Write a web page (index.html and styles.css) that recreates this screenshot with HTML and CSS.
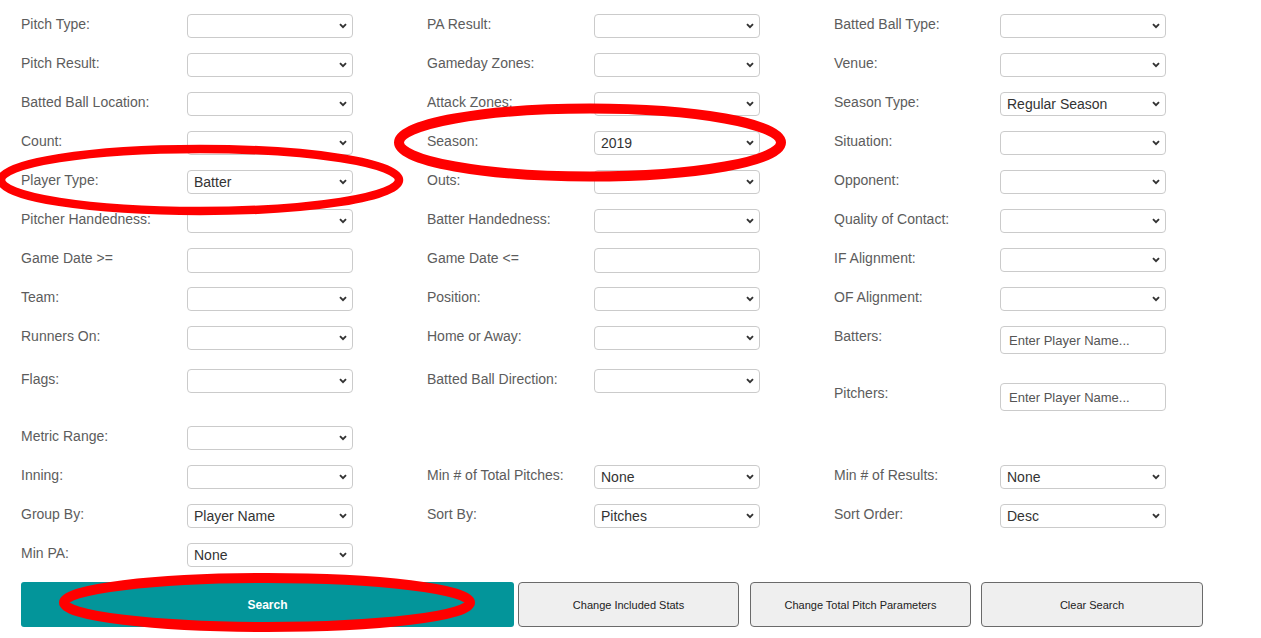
FILE: index.html
```html
<!DOCTYPE html>
<html>
<head>
<meta charset="utf-8">
<title>Search</title>
<link rel="stylesheet" href="styles.css">
</head>
<body>
<div class="page">
  <form class="filters">
    <label class="lbl">Pitch Type:</label><select class="sel"><option></option></select>
    <label class="lbl">PA Result:</label><select class="sel"><option></option></select>
    <label class="lbl">Batted Ball Type:</label><select class="sel"><option></option></select>

    <label class="lbl">Pitch Result:</label><select class="sel"><option></option></select>
    <label class="lbl">Gameday Zones:</label><select class="sel"><option></option></select>
    <label class="lbl">Venue:</label><select class="sel"><option></option></select>

    <label class="lbl">Batted Ball Location:</label><select class="sel"><option></option></select>
    <label class="lbl">Attack Zones:</label><select class="sel"><option></option></select>
    <label class="lbl">Season Type:</label><select class="sel"><option>Regular Season</option></select>

    <label class="lbl">Count:</label><select class="sel"><option></option></select>
    <label class="lbl">Season:</label><select class="sel"><option>2019</option></select>
    <label class="lbl">Situation:</label><select class="sel"><option></option></select>

    <label class="lbl">Player Type:</label><select class="sel"><option>Batter</option></select>
    <label class="lbl">Outs:</label><select class="sel"><option></option></select>
    <label class="lbl">Opponent:</label><select class="sel"><option></option></select>

    <label class="lbl">Pitcher Handedness:</label><select class="sel"><option></option></select>
    <label class="lbl">Batter Handedness:</label><select class="sel"><option></option></select>
    <label class="lbl">Quality of Contact:</label><select class="sel"><option></option></select>

    <label class="lbl">Game Date &gt;=</label><input class="txt" type="text">
    <label class="lbl">Game Date &lt;=</label><input class="txt" type="text">
    <label class="lbl">IF Alignment:</label><select class="sel"><option></option></select>

    <label class="lbl">Team:</label><select class="sel"><option></option></select>
    <label class="lbl">Position:</label><select class="sel"><option></option></select>
    <label class="lbl">OF Alignment:</label><select class="sel"><option></option></select>

    <label class="lbl">Runners On:</label><select class="sel"><option></option></select>
    <label class="lbl">Home or Away:</label><select class="sel"><option></option></select>
    <label class="lbl">Batters:</label><input class="txt txt-player" type="text" placeholder="Enter Player Name...">

    <label class="lbl">Flags:</label><select class="sel"><option></option></select>
    <label class="lbl">Batted Ball Direction:</label><select class="sel"><option></option></select>
    <label class="lbl shift">Pitchers:</label><input class="txt txt-player shift" type="text" placeholder="Enter Player Name...">

    <label class="lbl">Metric Range:</label><select class="sel"><option></option></select>
    <span></span><span></span>
    <span></span><span></span>

    <label class="lbl">Inning:</label><select class="sel"><option></option></select>
    <label class="lbl">Min # of Total Pitches:</label><select class="sel"><option>None</option></select>
    <label class="lbl">Min # of Results:</label><select class="sel"><option>None</option></select>

    <label class="lbl">Group By:</label><select class="sel"><option>Player Name</option></select>
    <label class="lbl">Sort By:</label><select class="sel"><option>Pitches</option></select>
    <label class="lbl">Sort Order:</label><select class="sel"><option>Desc</option></select>

    <label class="lbl">Min PA:</label><select class="sel"><option>None</option></select>
  </form>
  <div class="actions">
    <button class="btn btn-search" type="button">Search</button>
    <button class="btn btn-gray btn-stats" type="button">Change Included Stats</button>
    <button class="btn btn-gray btn-params" type="button">Change Total Pitch Parameters</button>
    <button class="btn btn-gray btn-clear" type="button">Clear Search</button>
  </div>
</div>
<svg class="marks" width="1261" height="638" viewBox="0 0 1261 638">
  <ellipse cx="200" cy="180" rx="199" ry="31" />
  <ellipse cx="590" cy="142.5" rx="191" ry="34" class="thick" />
  <ellipse cx="267" cy="602.5" rx="203" ry="24.5" class="thick" />
</svg>
</body>
</html>
```

FILE: styles.css
```css
html, body {
  margin: 0;
  padding: 0;
  background: #ffffff;
  overflow: hidden;
}

body {
  font-family: "Liberation Sans", Arial, sans-serif;
  position: relative;
  width: 1261px;
  height: 638px;
}

.page {
  padding: 14px 0 0 21px;
}

.filters {
  display: grid;
  grid-template-columns: 166px 240px 167px 240px 166px 166px;
  grid-template-rows: repeat(8, 39px) 43px 57px repeat(4, 39px);
  margin: 0;
}

.lbl {
  align-self: start;
  font-size: 14px;
  line-height: 20px;
  color: #5c5c5c;
  white-space: nowrap;
}

.sel {
  align-self: start;
  -webkit-appearance: none;
  appearance: none;
  box-sizing: border-box;
  width: 166px;
  height: 24px;
  margin: 0;
  padding: 0 20px 0 6px;
  border: 1px solid #cbcbcb;
  border-radius: 4px;
  background-color: #ffffff;
  background-image: url("data:image/svg+xml;utf8,<svg xmlns='http://www.w3.org/2000/svg' width='8' height='6' viewBox='0 0 8 6'><path d='M1 1.2 L4 4.2 L7 1.2' fill='none' stroke='%23333' stroke-width='1.9'/></svg>");
  background-repeat: no-repeat;
  background-position: right 5px center;
  background-size: 8px 6px;
  font-family: "Liberation Sans", Arial, sans-serif;
  font-size: 14px;
  color: #333333;
  outline: none;
}

.txt {
  align-self: start;
  box-sizing: border-box;
  width: 166px;
  height: 25px;
  margin: 0;
  padding: 0 8px;
  border: 1px solid #cbcbcb;
  border-radius: 4px;
  background: #ffffff;
  font-family: "Liberation Sans", Arial, sans-serif;
  font-size: 13px;
  color: #333333;
  outline: none;
}

.txt-player {
  height: 28px;
}

.txt-player::placeholder {
  color: #555555;
  opacity: 1;
}

.shift {
  margin-top: 14px;
}

.actions {
  display: flex;
  height: 45px;
}

.btn {
  box-sizing: border-box;
  height: 45px;
  margin: 0;
  padding: 0;
  font-family: "Liberation Sans", Arial, sans-serif;
  cursor: pointer;
}

.btn-search {
  width: 493px;
  border: none;
  border-radius: 3px;
  background: #03959a;
  color: #ffffff;
  font-size: 12px;
  font-weight: bold;
}

.btn-gray {
  width: 221px;
  border: 1px solid #6a6a6a;
  border-radius: 4px;
  background: #efefef;
  color: #222222;
  font-size: 11px;
}

.btn-stats {
  margin-left: 4px;
}

.btn-params {
  margin-left: 11px;
}

.btn-clear {
  margin-left: 10px;
  width: 222px;
}

.marks {
  position: absolute;
  top: 0;
  left: 0;
  pointer-events: none;
}

.marks ellipse {
  fill: none;
  stroke: #ff0000;
  stroke-width: 8.5;
}

.marks .thick {
  stroke-width: 10;
}
```
